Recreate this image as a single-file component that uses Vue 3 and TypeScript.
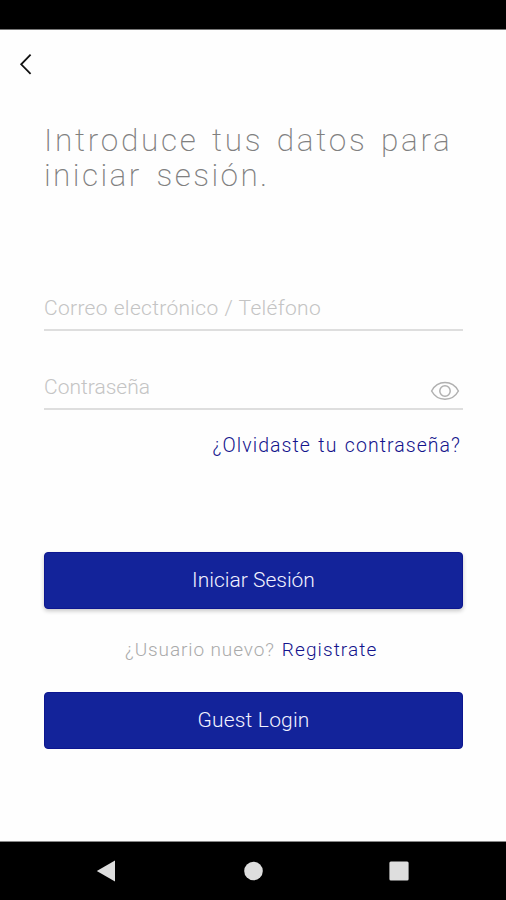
<script setup lang="ts">
import { ref } from 'vue'

const account = ref('')
const password = ref('')
const passwordVisible = ref(false)
</script>

<template>
  <div class="screen">
    <div class="status-bar"></div>
    <main class="content">
      <button class="back" type="button" aria-label="Atrás">
        <svg width="14" height="22" viewBox="0 0 14 22">
          <path d="M11.6 1.6 2.2 11.3 11.6 20.8" fill="none" stroke="#111" stroke-width="1.8" />
        </svg>
      </button>
      <h1 class="title"><span class="line first">Introduce tus datos para</span><span class="line second">iniciar sesión.</span></h1>
      <form class="form" @submit.prevent>
        <div class="field">
          <input v-model="account" class="input account" type="text" placeholder="Correo electrónico / Teléfono" />
        </div>
        <div class="field">
          <input v-model="password" class="input password" :type="passwordVisible ? 'text' : 'password'" placeholder="Contraseña" />
          <button class="eye" type="button" aria-label="Mostrar contraseña" @click="passwordVisible = !passwordVisible">
            <svg width="30" height="20" viewBox="0 0 30 20">
              <g fill="none" stroke="#b0b0b0" stroke-width="1.5">
                <path d="M1.6 10C4.6 4.5 9.3 1.6 15 1.6S25.4 4.5 28.4 10C25.4 15.5 20.7 18.2 15 18.2S4.6 15.5 1.6 10Z" />
                <circle cx="15" cy="10" r="5.2" />
              </g>
            </svg>
          </button>
        </div>
        <a class="forgot">¿Olvidaste tu contraseña?</a>
        <button class="action raised" type="submit">Iniciar Sesión</button>
        <p class="register"><span class="question">¿Usuario nuevo?</span><a class="link">Registrate</a></p>
        <button class="action guest" type="button">Guest Login</button>
      </form>
    </main>
    <nav class="nav-bar">
      <svg width="20" height="22" viewBox="0 0 20 22"><path d="M.8 11 19 .4V21.6Z" fill="#dedede" /></svg>
      <svg width="20" height="20" viewBox="0 0 20 20"><circle cx="10.5" cy="10" r="9.3" fill="#dedede" /></svg>
      <svg width="20" height="20" viewBox="0 0 20 20"><rect x=".4" y=".4" width="19.2" height="19.2" rx="1.5" fill="#dedede" /></svg>
    </nav>
  </div>
</template>

<style>
body {
  margin: 0;
  background: #fefefe;
}
</style>

<style scoped>
.screen {
  display: flex;
  flex-direction: column;
  width: 506px;
  height: 900px;
  overflow: hidden;
  background: #fefefe;
  font-family: Roboto, "Liberation Sans", sans-serif;
  font-weight: 300;
}
.status-bar {
  box-sizing: border-box;
  height: 30px;
  background: #000;
  border-bottom: 1px solid #777;
}
.content {
  flex: 1;
  padding: 23px 43px 0 44px;
}
button {
  padding: 0;
  border: 0;
  background: none;
  font: inherit;
}
.back {
  display: block;
  height: 22px;
  margin-left: -25px;
}
.title {
  margin: 48px 0 0;
  font-size: 31.5px;
  font-weight: 200;
  line-height: 35px;
  color: #808080;
  white-space: nowrap;
}
.line {
  display: block;
}
.first {
  letter-spacing: 2.72px;
  word-spacing: 3.2px;
}
.second {
  letter-spacing: 2.4px;
  word-spacing: 5px;
}
.form {
  display: flex;
  flex-direction: column;
  margin-top: 92px;
}
.field {
  display: flex;
  align-items: center;
  box-sizing: border-box;
  height: 46px;
  border-bottom: 2px solid #dedede;
}
.field + .field {
  margin-top: 33px;
}
.input {
  flex: 1;
  min-width: 0;
  height: 44px;
  padding: 2px 0 0;
  border: 0;
  outline: 0;
  background: none;
  font: inherit;
  font-size: 21px;
}
.input::placeholder {
  color: #c4c4c4;
  opacity: 1;
}
.account {
  letter-spacing: 0.3px;
  word-spacing: 0.5px;
}
.password {
  letter-spacing: 0;
}
.eye {
  height: 20px;
  margin: 10px 3px 0 0;
}
.eye svg,
.back svg {
  display: block;
}
.forgot {
  align-self: flex-end;
  height: 24px;
  margin: 24px 2px 0 0;
  font-size: 19.5px;
  line-height: 24px;
  letter-spacing: 1.05px;
  word-spacing: 1.6px;
  color: #13138c;
}
.action {
  height: 57px;
  padding-bottom: 1px;
  border-radius: 4px;
  background: #13239a;
  border: 1px solid #0d1690;
  color: #f2f2ff;
  font-size: 21px;
}
.raised {
  margin-top: 94px;
  box-shadow: 0 2px 4px rgba(0, 0, 0, 0.22);
}
.guest {
  letter-spacing: 0.2px;
}
.register {
  display: flex;
  gap: 7px;
  height: 24px;
  margin: 28px 0 31px 81px;
  font-size: 19px;
  line-height: 25px;
  white-space: nowrap;
}
.question {
  color: #aaa;
  letter-spacing: 0.9px;
}
.link {
  color: #13138c;
  letter-spacing: 1.1px;
}
.nav-bar {
  display: grid;
  grid-template-columns: 20px 20px 20px;
  justify-content: space-between;
  align-items: center;
  box-sizing: border-box;
  height: 59px;
  padding: 0 97px 0 96px;
  border-top: 1px solid #888;
  background: #000;
}
</style>
